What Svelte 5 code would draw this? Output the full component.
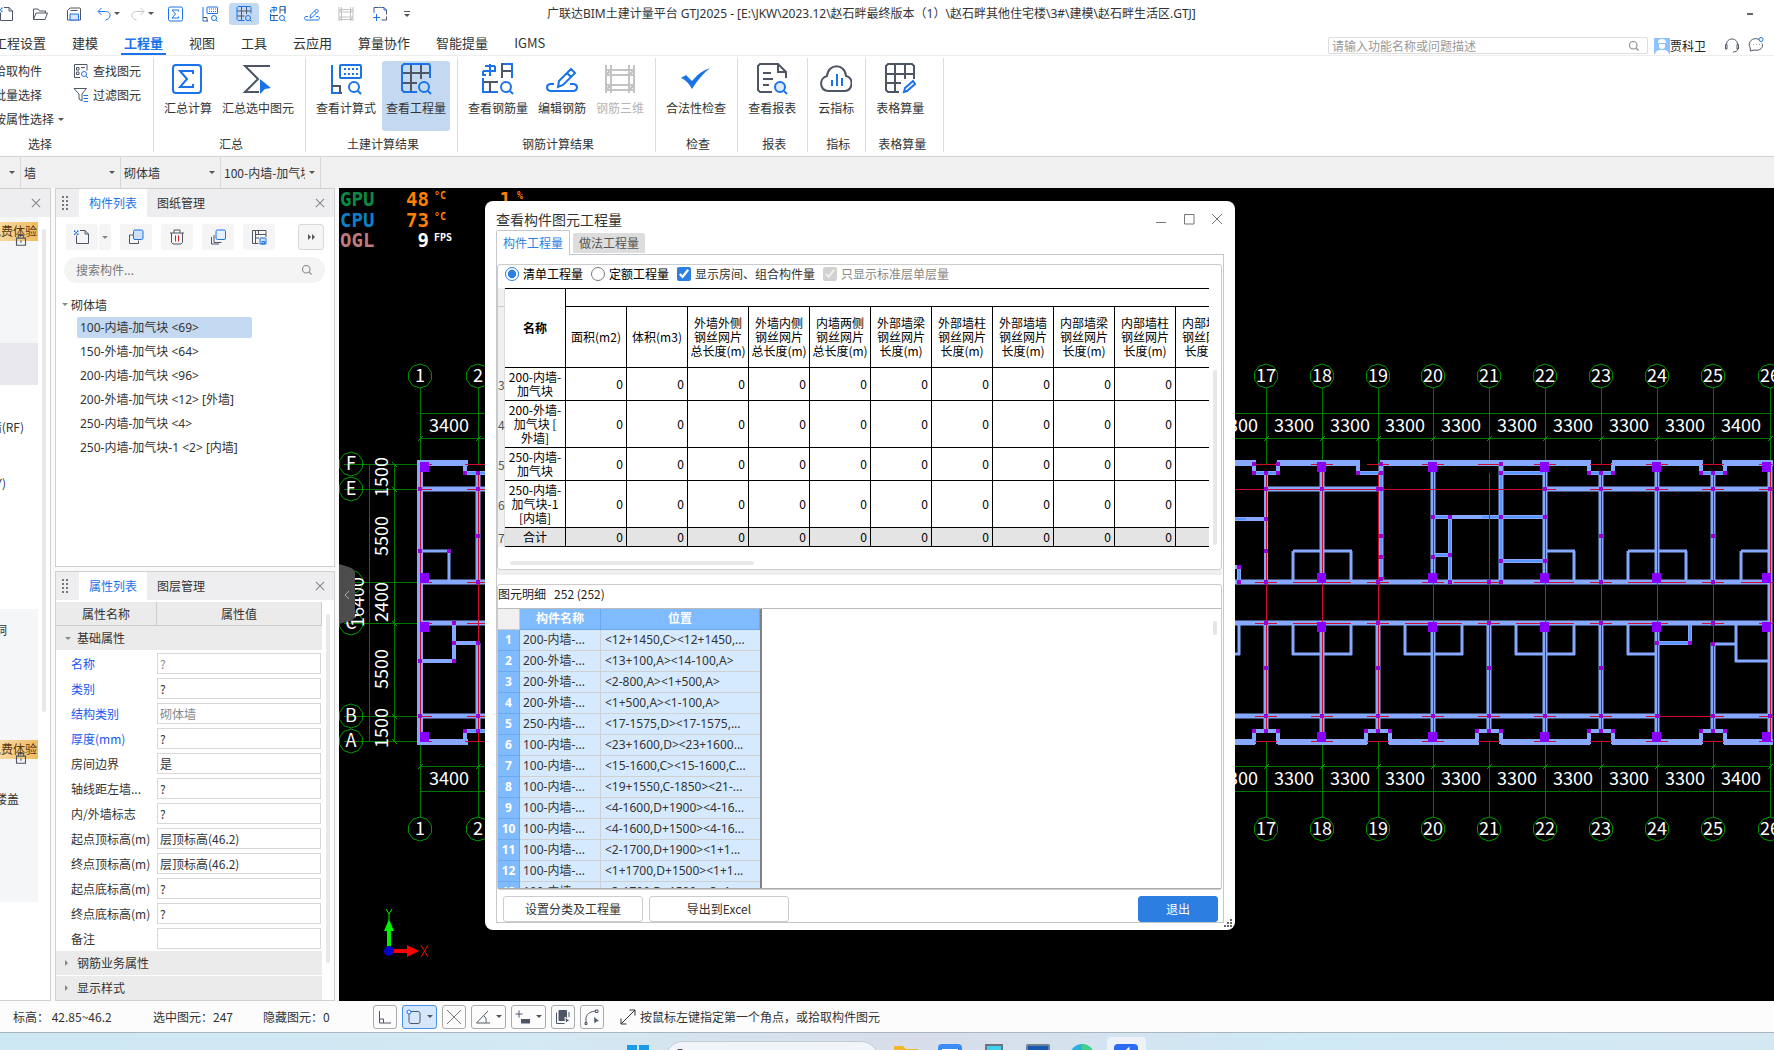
<script>
  const D = "#4e5666";
  const B = "#1a73e8";

  const magnifier = `<circle cx="24" cy="24" r="5" stroke="${B}"/><path d="M28 28l3 3" stroke="${B}"/>`;

  // all icons are drawn on a 32 x 32 grid
  const icons = {
    newDoc: `<path d="M12 3h10l7 7v19H5V13M22 3v7h7" stroke="${D}"/><path d="M0 3h3v3H0zM6 3h3v3H6zM3 6h3v3H3zM0 9h3v3H0zM6 9h3v3H6z" fill="${B}" stroke="none"/>`,
    open: `<path d="M3 27V6h9l3 4h12v4M3 27l5-13h23l-5 13z" stroke="${D}"/>`,
    save: `<path d="M3 28V9l5-5h20l1 1v23z" stroke="${D}"/><path d="M9 9h14" stroke="${D}"/><path d="M8 16h17v12H8z" fill="#d6e6fb" stroke="${B}"/>`,
    undo: `<path d="M11 4l-7 7 7 7M5 11h14c6 0 10 4 9 9-1 4-4 7-9 8" stroke="${B}"/>`,
    redo: `<path d="M21 4l7 7-7 7M27 11H13c-6 0-10 4-9 9 1 4 4 7 9 8" stroke="#c3c3c3"/>`,
    sigma: `<rect x="1" y="2" width="28" height="28" rx="3" stroke="${B}"/><path d="M21 11V8H8l7 8-7 8h13v-3" stroke="${B}"/>`,
    sumSelected: `<path d="M28 3H3l13 13L3 29h14" stroke="${D}"/><path d="M18 16l11 9-6 1-5 5z" fill="${B}" stroke="none"/>`,
    formula: `<path d="M2 2v28h9" stroke="${B}"/><path d="M2 23h8v7h2" stroke="${D}"/><rect x="10" y="2" width="21" height="13" rx="1" stroke="${B}"/><path d="M14 6h2M18 6h2M22 6h2M26 6h2M14 11h2M18 11h2M22 11h2M26 11h2" stroke="${B}"/>${magnifier}`,
    table: `<path d="M2 10h28M2 20h15M11 2v27M21 2v14" stroke="${D}"/><path d="M30 15V3l-1-2H4L2 3v24l2 2h13" stroke="${B}"/>${magnifier}`,
    rebar: `<path d="M8 1v12M3 3h10M13 3v4M1 8h13M1 8v4h3" stroke="${B}" stroke-linejoin="round"/><path d="M20 15V1h10v14M20 8h10" stroke="${D}"/><path d="M30 15V1h-8M1 15v14h15" stroke="${B}"/><path d="M2 19h14M8 19v10" stroke="${D}"/>${magnifier}`,
    edit: `<path d="M8 21H4c-4 1-4 6 0 7h24c4-1 4-6 0-7h-4M12 24l1-6L25 6l4 4-12 12zM21 10l4 4" stroke="${B}"/>`,
    rebar3d: `<path d="M2 2v28M7 2v28M25 2v28M30 2v28M2 7h28M2 12h28M2 22h28M2 27h28M2 12l5-5M25 12l5-5M2 27l5-5M25 27l5-5" stroke="#c3c3c3"/>`,
    frame: `<path d="M4 10V3h9M19 3h5l5 5v9M29 21v7h-8" stroke="${D}"/><path d="M4 14v-4M13 3h6M24 3v5h5M9 16v14M2 23h14M19 28h3" stroke="${B}"/>`,
    check: `<path d="M1 15l5-3 6 6Q20 8 30 5 20 13 12 26 8 18 1 15z" fill="${B}" stroke="none"/>`,
    report: `<path d="M16 29H4l-2-2V3l2-2h18l8 8v6M22 1v8h8M7 10h8M7 16h10M7 22h6" stroke="${D}"/><circle cx="24" cy="24" r="5" fill="#dcebff" stroke="${B}"/><path d="M28 28l3 3" stroke="${B}"/>`,
    cloud: `<path d="M8 28c-9-1-9-13-1-15C8 0 25 0 26 13c8 2 7 14-1 15z" stroke="${D}"/><path d="M12 23v-6M17 23V11M22 23v-8" stroke="${B}"/>`,
    tableEdit: `<path d="M15 29H4l-2-2V3l2-2h24l2 2v13M2 11h28M2 20h15M11 1v28M21 1v15" stroke="${D}"/><path d="M20 29l1-4 8-7 2 3-8 7z" stroke="${B}"/>`,
    find: `<path d="M14 29H3V3h25v12M7 9h5v5H7zM16 9h8M7 18h5v5H7z" stroke="${D}"/><circle cx="22" cy="22" r="5" stroke="${B}"/><path d="M26 26l4 4" stroke="${B}"/>`,
    filter: `<path d="M2 3h25l-9 11v14l-6-4V14z" stroke="${D}"/><path d="M21 17h9M21 23h9M21 29h9" stroke="${B}"/>`,
    copy: `<path d="M10 12H3v17h18v-6" stroke="${D}"/><rect x="11" y="2" width="19" height="19" rx="3" fill="#cfe0f8" stroke="${B}"/>`,
    trash: `<path d="M2 8h28M10 8V2h12v6M5 8v19l3 3h16l3-3V8" stroke="${D}"/><path d="M13 13v12M19 13v12" stroke="#e02020"/>`,
    layers: `<path d="M8 12v15h15M3 16v14h15" stroke="${D}"/><rect x="12" y="2" width="19" height="19" rx="3" fill="#e6f0ff" stroke="${B}"/>`,
    saveAs: `<path d="M15 29H3V3h27v13M9 3v26M15 3v8h15M9 11h6M9 18h7" stroke="${D}"/><path d="M18 18h11l1 1v11H18zM22 25h5v5h-5z" fill="#cfe0f8" stroke="${B}"/>`,
    search: `<circle cx="14" cy="14" r="10" stroke="#888" stroke-width="3"/><path d="M22 22l6 6" stroke="#888" stroke-width="3"/>`,
    headset: `<path d="M5 16C4 0 28 0 27 16M5 15H3v9h3v-9M27 15h2v9h-3v-9M27 24c0 4-4 6-9 6" stroke="${D}"/>`,
    chat: `<path d="M22 5C10-1-2 10 4 21l1 7 7-2c12 3 20-6 16-13M10 15h1M16 15h1M22 15h1" stroke="${D}"/><circle cx="26" cy="5" r="4" stroke="${B}"/>`,
    lock: `<path d="M4 11h24v19H4zM9 11V4h14v7M16 17v6" stroke="${D}" stroke-width="3"/>`,
    close: `<path d="M5 5l22 22M27 5L5 27" stroke="#888" stroke-width="3"/>`,
    closeDark: `<path d="M6 6l20 20M26 6L6 26" stroke="#777"/>`,
    maximize: `<path d="M7 7h19v19H7z" stroke="#777"/>`,
    minimize: `<path d="M6 23h20" stroke="#777"/>`,
    ortho: `<path d="M5 4v24h23M5 20h8v8" stroke="${D}"/>`,
    rect: `<rect x="6" y="5" width="22" height="24" rx="4" stroke="${D}"/><circle cx="6" cy="6" r="4" fill="#fff" stroke="${B}"/>`,
    cross: `<path d="M2 2l28 28M30 2L2 30" stroke="#777"/>`,
    angle: `<path d="M26 4L3 28h27M18 14c4 3 5 8 4 13" stroke="${D}"/>`,
    plus: `<path d="M8 3v14M1 10h14" stroke="${D}"/><path d="M12 20h18v9H12z" fill="${D}" stroke="none"/>`,
    select: `<path d="M8 3h15v20H8z" fill="${D}" stroke="${D}"/><path d="M3 7v22h16M28 6v10" stroke="${D}"/><path d="M20 16l10 8-5 1-4 4z" fill="${D}" stroke="#fff"/>`,
    curve: `<path d="M4 29V17C7 8 14 5 24 4" stroke="${D}"/><path d="M20 16l10 8-5 1-4 4z" fill="${D}" stroke="none"/><path d="M2 27h4v4H2zM23 2h5v5h-5z" stroke="${D}"/>`,
    expand: `<path d="M19 2h11v11M30 2L2 30M2 19v11h11" stroke="#333"/>`,
  };

  const quickIcons = [
    { icon: "newDoc", label: "新建" },
    { icon: "open", label: "打开" },
    { icon: "save", label: "保存" },
    { icon: "undo", label: "撤销", arrow: true },
    { icon: "redo", label: "恢复", arrow: true },
    { icon: "sigma", label: "汇总计算" },
    { icon: "formula", label: "查看计算式" },
    { icon: "table", label: "查看工程量", active: true },
    { icon: "rebar", label: "查看钢筋量" },
    { icon: "edit", label: "编辑钢筋" },
    { icon: "rebar3d", label: "钢筋三维" },
    { icon: "frame", label: "截图" },
  ];

  const menus = ["工程设置", "建模", "工程量", "视图", "工具", "云应用", "算量协作", "智能提量", "IGMS"];

  const ribbonGroups = [
    { name: "汇总", items: [["sigma", "汇总计算"], ["sumSelected", "汇总选中图元"]] },
    { name: "土建计算结果", items: [["formula", "查看计算式"], ["table", "查看工程量"]] },
    { name: "钢筋计算结果", items: [["rebar", "查看钢筋量"], ["edit", "编辑钢筋"], ["rebar3d", "钢筋三维"]] },
    { name: "检查", items: [["check", "合法性检查"]] },
    { name: "报表", items: [["report", "查看报表"]] },
    { name: "指标", items: [["cloud", "云指标"]] },
    { name: "表格算量", items: [["tableEdit", "表格算量"]] },
  ];

  const combos = ["墙", "砌体墙", "100-内墙-加气块"];

  const components = [
    "100-内墙-加气块 <69>",
    "150-外墙-加气块 <64>",
    "200-内墙-加气块 <96>",
    "200-外墙-加气块 <12> [外墙]",
    "250-内墙-加气块 <4>",
    "250-内墙-加气块-1 <2> [内墙]",
  ];
  let selected = $state(0);

  const properties = [
    { name: "名称", value: "?", blue: true, dim: true },
    { name: "类别", value: "?", blue: true },
    { name: "结构类别", value: "砌体墙", blue: true, dim: true },
    { name: "厚度(mm)", value: "?", blue: true },
    { name: "房间边界", value: "是" },
    { name: "轴线距左墙...", value: "?" },
    { name: "内/外墙标志", value: "?" },
    { name: "起点顶标高(m)", value: "层顶标高(46.2)" },
    { name: "终点顶标高(m)", value: "层顶标高(46.2)" },
    { name: "起点底标高(m)", value: "?" },
    { name: "终点底标高(m)", value: "?" },
    { name: "备注", value: "" },
  ];

  const columns = [
    "面积(m2)",
    "体积(m3)",
    "外墙外侧\n钢丝网片\n总长度(m)",
    "外墙内侧\n钢丝网片\n总长度(m)",
    "内墙两侧\n钢丝网片\n总长度(m)",
    "外部墙梁\n钢丝网片\n长度(m)",
    "外部墙柱\n钢丝网片\n长度(m)",
    "外部墙墙\n钢丝网片\n长度(m)",
    "内部墙梁\n钢丝网片\n长度(m)",
    "内部墙柱\n钢丝网片\n长度(m)",
    "内部墙墙\n钢丝网片\n长度(m)",
  ];
  const quantities = [
    { no: 3, name: "200-内墙-\n加气块" },
    { no: 4, name: "200-外墙-\n加气块 [\n外墙]", tall: true },
    { no: 5, name: "250-内墙-\n加气块" },
    { no: 6, name: "250-内墙-\n加气块-1\n[内墙]", tall: true },
    { no: 7, name: "合计", total: true },
  ];

  const details = [
    ["200-内墙-...", "<12+1450,C><12+1450,..."],
    ["200-外墙-...", "<13+100,A><14-100,A>"],
    ["200-外墙-...", "<2-800,A><1+500,A>"],
    ["200-外墙-...", "<1+500,A><1-100,A>"],
    ["250-内墙-...", "<17-1575,D><17-1575,..."],
    ["100-内墙-...", "<23+1600,D><23+1600..."],
    ["100-内墙-...", "<15-1600,C><15-1600,C..."],
    ["100-内墙-...", "<19+1550,C-1850><21-..."],
    ["100-内墙-...", "<4-1600,D+1900><4-16..."],
    ["100-内墙-...", "<4-1600,D+1500><4-16..."],
    ["100-内墙-...", "<2-1700,D+1900><1+1..."],
    ["100-内墙-...", "<1+1700,D+1500><1+1..."],
    ["100-内墙-...", "<3-1700,D+1500><3+1..."],
  ];

  let scope = $state("list");
  let showRooms = $state(true);

  // ---- floor plan ----
  const axes = [
    [1, 420], [2, 478], [17, 1266], [18, 1322], [19, 1378], [20, 1433], [21, 1489],
    [22, 1545], [23, 1601], [24, 1657], [25, 1713], [26, 1770],
  ];
  const rows = [["F", 464], ["E", 489], ["C", 623], ["B", 716], ["A", 741]];
  const spans = [
    ["3400", 449], ["3300", 1238], ["3300", 1294], ["3300", 1350], ["3300", 1405], ["3300", 1461],
    ["3300", 1517], ["3300", 1573], ["3300", 1629], ["3300", 1685], ["3400", 1741],
  ];
  const sideSpans = [["1500", 477], ["5500", 536], ["2400", 602], ["5500", 669], ["1500", 728]];

  // x1, y1, x2, y2, thickness
  const walls = [
    [417, 463, 468, 463, 6], [420, 461, 420, 744, 6], [465, 463, 465, 474, 4], [463, 473, 486, 473, 4],
    [420, 489, 486, 489, 5], [478, 473, 478, 582, 5], [420, 582, 486, 582, 5], [420, 623, 486, 623, 5],
    [420, 551, 451, 551, 3], [449, 551, 449, 582, 3], [454, 623, 454, 662, 4], [454, 643, 480, 643, 4],
    [420, 661, 455, 661, 4], [478, 643, 478, 731, 5], [420, 716, 486, 716, 5], [417, 742, 468, 742, 6],
    [465, 730, 465, 742, 4], [463, 731, 486, 731, 4],
    [1235, 463, 1256, 463, 6], [1277, 463, 1360, 463, 6], [1380, 463, 1591, 463, 6],
    [1612, 463, 1703, 463, 6], [1722, 463, 1773, 463, 6],
    [1254, 463, 1254, 474, 4], [1278, 463, 1278, 474, 4], [1252, 473, 1280, 473, 4],
    [1358, 463, 1358, 474, 4], [1357, 473, 1383, 473, 4],
    [1589, 463, 1589, 474, 4], [1613, 463, 1613, 474, 4], [1587, 473, 1615, 473, 4],
    [1701, 463, 1701, 474, 4], [1725, 463, 1725, 474, 4], [1699, 473, 1727, 473, 4],
    [1266, 489, 1381, 489, 5], [1545, 489, 1772, 489, 5],
    [1266, 473, 1266, 582, 4], [1322, 463, 1322, 582, 5], [1381, 463, 1381, 584, 5],
    [1433, 463, 1433, 582, 5], [1501, 463, 1501, 582, 5], [1545, 463, 1545, 582, 5],
    [1601, 473, 1601, 582, 5], [1657, 463, 1657, 582, 5], [1713, 473, 1713, 582, 5],
    [1770, 463, 1770, 744, 5],
    [1235, 519, 1266, 519, 4], [1433, 517, 1545, 517, 4], [1450, 517, 1450, 582, 4],
    [1433, 555, 1450, 555, 4], [1501, 473, 1545, 473, 4], [1501, 561, 1545, 561, 4],
    [1235, 567, 1241, 567, 4], [1239, 567, 1239, 582, 4],
    [1293, 551, 1352, 551, 3], [1293, 551, 1293, 582, 3], [1351, 551, 1351, 582, 3],
    [1545, 551, 1575, 551, 3], [1574, 551, 1574, 582, 3],
    [1628, 551, 1687, 551, 3], [1628, 551, 1628, 582, 3], [1686, 551, 1686, 582, 3],
    [1741, 551, 1770, 551, 3], [1741, 551, 1741, 582, 3],
    [1235, 582, 1772, 582, 5], [1235, 623, 1772, 623, 5],
    [1239, 623, 1239, 655, 3], [1235, 654, 1240, 654, 3],
    [1293, 623, 1293, 655, 3], [1351, 623, 1351, 655, 3], [1292, 654, 1352, 654, 3],
    [1405, 623, 1405, 655, 3], [1462, 623, 1462, 655, 3], [1404, 654, 1463, 654, 3],
    [1516, 623, 1516, 655, 3], [1574, 623, 1574, 655, 3], [1515, 654, 1575, 654, 3],
    [1628, 623, 1628, 655, 3], [1627, 654, 1657, 654, 3],
    [1657, 643, 1691, 643, 4], [1690, 623, 1690, 645, 4],
    [1711, 644, 1737, 644, 3], [1736, 623, 1736, 662, 3], [1735, 661, 1770, 661, 3],
    [1266, 623, 1266, 731, 5], [1322, 623, 1322, 742, 5], [1378, 623, 1378, 731, 5],
    [1433, 623, 1433, 742, 5], [1489, 623, 1489, 731, 5], [1545, 623, 1545, 742, 5],
    [1601, 623, 1601, 731, 5], [1657, 623, 1657, 742, 5], [1713, 643, 1713, 731, 5],
    [1235, 716, 1657, 716, 5], [1713, 716, 1772, 716, 5],
    [1235, 742, 1255, 742, 6], [1278, 742, 1367, 742, 6], [1389, 742, 1479, 742, 6],
    [1501, 742, 1590, 742, 6], [1612, 742, 1702, 742, 6], [1724, 742, 1773, 742, 6],
  ];
  for (const x of [1266, 1378, 1489, 1601, 1713]) {
    walls.push([x - 14, 731, x + 14, 731, 4], [x - 12, 730, x - 12, 744, 4], [x + 12, 730, x + 12, 744, 4]);
  }

  // brighter centre lines of the thin inner walls
  const cores = [
    [1255, 473, 1278, 473], [1360, 473, 1380, 473], [1590, 473, 1612, 473], [1702, 473, 1724, 473],
    [1381, 473, 1381, 580], [1501, 473, 1501, 580], [1503, 473, 1543, 473], [1435, 517, 1448, 517],
    [1482, 517, 1543, 517], [1450, 520, 1450, 580], [1503, 561, 1543, 561], [1435, 555, 1448, 555],
    [1235, 519, 1246, 519], [1239, 569, 1239, 580], [1659, 643, 1688, 643], [1690, 625, 1690, 641],
    [467, 473, 486, 473], [467, 731, 486, 731],
  ];

  const reds = [
    [1235, 489, 1545, 489], [1657, 716, 1713, 716], [420, 463, 420, 742], [478, 473, 478, 742],
    [465, 464, 486, 464], [465, 741, 486, 741],
  ];
  for (const [no, x] of axes.slice(2)) {
    const even = no % 2 === 0;
    reds.push([x, even ? 464 : 473, x, even ? 741 : 731]);
    for (const y of [464, 489, 582, 623, 716, 741]) {
      if (y === 489 && no > 19 && no < 22) continue;
      reds.push([x - 11, y, Math.min(x + 11, 1774), y]);
    }
  }
  for (const y of [464, 489, 582, 623, 716, 741]) reds.push([420, y, 432, y], [467, y, 486, y]);
  for (const [a, b] of [[1293, 1351], [1545, 1574], [1628, 1686], [1741, 1770], [1454, 1501]]) reds.push([a, 582, b, 582]);
  for (const [a, b] of [[1293, 1351], [1405, 1462], [1516, 1574], [1628, 1657]]) reds.push([a, 623, b, 623]);

  const columnBlocks = [];
  for (const x of [425, 1322, 1433, 1545, 1657, 1767]) {
    for (const y of [467, 578, 627, 737]) columnBlocks.push([x, y]);
  }

  const dots = [
    [1254, 464], [1278, 464], [1254, 473], [1266, 473], [1278, 473], [1266, 551], [1381, 464], [1381, 473],
    [1381, 489], [1381, 536], [1381, 557], [1381, 579], [1358, 473], [1433, 517], [1450, 517], [1501, 517],
    [1545, 517], [1450, 555], [1433, 557], [1501, 473], [1501, 464], [1501, 561], [1545, 561], [1501, 582],
    [1450, 582], [1601, 536], [1713, 536], [1589, 473], [1613, 473], [1601, 473], [1701, 473], [1725, 473],
    [1713, 473], [1239, 567], [1239, 582], [1266, 519], [1266, 668], [1378, 668], [1489, 668], [1601, 668],
    [1690, 643], [1657, 643], [1713, 644], [478, 473], [465, 473], [478, 536], [478, 582], [420, 489],
    [478, 489], [420, 716], [478, 716], [454, 623], [454, 643], [454, 661], [478, 643], [420, 661], [420, 551],
    [449, 551], [465, 731], [478, 731],
  ];
  for (const [no, x] of axes.slice(2)) {
    for (const y of [489, 716]) if (!(y === 489 && (no === 20 || no === 21))) dots.push([x, y]);
    if (no % 2) dots.push([x, 582], [x, 623], [x, 731], [x - 12, 731], [x + 12, 731]);
  }

  const bubble = (cx, cy) =>
    Array.from({ length: 10 }, (_, i) => {
      const a = (Math.PI / 5) * i + Math.PI / 2;
      return `${(cx + 12 * Math.cos(a)).toFixed(1)},${(cy + 12 * Math.sin(a)).toFixed(1)}`;
    }).join(" ");
</script>

{#snippet icon(name, size = "s16")}
  <svg class="icon {size}" viewBox="0 0 32 32" fill="none" stroke-width="2" aria-hidden="true">{@html icons[name]}</svg>
{/snippet}

<div class="app">
  <header class="titlebar">
    <div class="quick">
      {#each quickIcons as q}
        <button class="quick-btn" class:active={q.active} aria-label={q.label}>
          {@render icon(q.icon)}{#if q.arrow}<span class="caret"></span>{/if}
        </button>
      {/each}
      <button class="quick-more" aria-label="更多"><span></span><i class="caret"></i></button>
    </div>
    <div class="title">广联达BIM土建计量平台 GTJ2025 - [E:\JKW\2023.12\赵石畔最终版本（1）\赵石畔其他住宅楼\3#\建模\赵石畔生活区.GTJ]</div>
    <button class="win-min" aria-label="最小化"></button>
  </header>

  <nav class="menubar">
    {#each menus as m}
      <a href="#top" class:current={m === "工程量"}>{m}</a>
    {/each}
    <label class="help-search">
      <input type="text" aria-label="搜索功能" placeholder="请输入功能名称或问题描述" />
      {@render icon("search", "s12")}
    </label>
    <div class="user">
      <svg class="avatar" viewBox="0 0 16 16"><rect width="16" height="16" fill="#8fc3ff" /><path d="M4 5a4 4 0 018 0zM5 6h6v2a3 3 0 01-6 0zM1 16c1-4 4-4 7-4s6 0 7 4z" fill="#fff" /></svg>
      <span>贾科卫</span>
    </div>
    <button class="plain" aria-label="客服">{@render icon("headset")}</button>
    <button class="plain" aria-label="消息">{@render icon("chat")}</button>
  </nav>

  <section class="ribbon">
    <div class="group select-group">
      <div class="select-cols">
        <div class="select-col first">
          <button>拾取构件</button>
          <button>批量选择</button>
          <button>按属性选择<span class="caret"></span></button>
        </div>
        <div class="select-col">
          <button>{@render icon("find")}查找图元</button>
          <button>{@render icon("filter")}过滤图元</button>
        </div>
      </div>
      <div class="caption">选择</div>
    </div>
    {#each ribbonGroups as g}
      <div class="group">
        <div class="tools">
          {#each g.items as [ic, label]}
            <button class="tool" class:active={label === "查看工程量"} disabled={label === "钢筋三维"}>
              {@render icon(ic, "s32")}
              <span>{label}</span>
            </button>
          {/each}
        </div>
        <div class="caption">{g.name}</div>
      </div>
    {/each}
  </section>

  <div class="combos">
    <div class="combo-stub"><span class="caret"></span></div>
    {#each combos as c}
      <div class="combo">
        <select aria-label={c}><option>{c}</option></select>
        <span class="caret"></span>
      </div>
    {/each}
  </div>

  <main class="work">
    <aside class="nav-dock">
      <div class="panel-head end"><button class="plain" aria-label="关闭导航">{@render icon("close", "s12")}</button></div>
      <div class="nav-body">
        <div class="nav-list">
          <div class="nav-block upper">
            <div class="badge">免费体验</div>
            {@render icon("lock", "s12")}
          </div>
          <div class="nav-current"></div>
          <div class="nav-rows">
            <span>砌体墙(RF)</span>
            <span>梁(Y)</span>
          </div>
          <div class="nav-block lower">
            <span>门窗洞</span>
            <div class="lock-row">
              <div class="badge">免费体验</div>
              {@render icon("lock", "s12")}
            </div>
            <span>空心楼盖</span>
          </div>
        </div>
        <div class="nav-scroll"></div>
      </div>
    </aside>

    <div class="docks">
      <section class="panel list-panel">
        <div class="panel-head">
          <span class="grip"></span>
          <button class="tab on">构件列表</button>
          <button class="tab">图纸管理</button>
          <button class="plain close" aria-label="关闭">{@render icon("close", "s12")}</button>
        </div>
        <div class="panel-tools">
          <div class="split">
            <button aria-label="新建构件">{@render icon("newDoc")}</button>
            <button class="drop" aria-label="新建选项"><span class="caret"></span></button>
          </div>
          <button aria-label="复制">{@render icon("copy")}</button>
          <button aria-label="删除">{@render icon("trash")}</button>
          <button aria-label="层间复制">{@render icon("layers")}</button>
          <button aria-label="存档">{@render icon("saveAs")}</button>
          <button class="more" aria-label="更多工具"><i></i><i></i></button>
        </div>
        <label class="search">
          <input type="text" aria-label="搜索构件" placeholder="搜索构件..." />
          {@render icon("search", "s12")}
        </label>
        <div class="tree">
          <div class="tree-root"><span class="caret"></span>砌体墙</div>
          {#each components as c, i}
            <button class="tree-item" class:selected={selected === i} onclick={() => (selected = i)}>{c}</button>
          {/each}
        </div>
      </section>

      <section class="panel">
        <div class="panel-head">
          <span class="grip"></span>
          <button class="tab on">属性列表</button>
          <button class="tab">图层管理</button>
          <button class="plain close" aria-label="关闭">{@render icon("close", "s12")}</button>
        </div>
        <div class="props">
          <div class="prop-list">
            <div class="prop-head"><span>属性名称</span><span>属性值</span></div>
            <div class="prop-cat"><span class="caret"></span>基础属性</div>
            {#each properties as p, i}
              <div class="prop-row">
                <label for="prop{i}" class:blue={p.blue}>{p.name}</label>
                <input id="prop{i}" type="text" value={p.value} class:dim={p.dim} />
              </div>
            {/each}
            <div class="prop-cat line"><span class="caret right"></span>钢筋业务属性</div>
            <div class="prop-cat line"><span class="caret right"></span>显示样式</div>
          </div>
          <div class="prop-scroll"></div>
        </div>
      </section>
    </div>

    <div class="canvas">
      <svg class="plan">
        <g transform="translate(-339 -188)">
          <g class="osd">
            <text x="340" y="206" fill="#0b8a43">GPU</text>
            <text x="340" y="227" fill="#0a80c8">CPU</text>
            <text x="340" y="247" fill="#c07c7c">OGL</text>
            <g text-anchor="end">
              <text x="429" y="206" fill="#ff8000">48</text>
              <text x="429" y="227" fill="#ff8000">73</text>
              <text x="429" y="247" fill="#fff">9</text>
              <text x="511" y="206" fill="#ff8000">1</text>
            </g>
            <g class="unit">
              <text x="434" y="199" fill="#ff8000">°C</text>
              <text x="434" y="220" fill="#ff8000">°C</text>
              <text x="434" y="241" fill="#fff">FPS</text>
              <text x="517" y="199" fill="#ff8000">%</text>
            </g>
          </g>

          <g stroke="#007800" fill="none" shape-rendering="crispEdges">
            {#each axes as [, x]}
              <path d="M{x} 388V464M{x} 741V817" />
            {/each}
            {#each rows as [, y]}
              <path d="M344 {y}H420" />
            {/each}
            <path d="M344 582H420M420 413H1770M420 438H1770M420 766H1770M420 791H1770M369 464V741M394 464V741" />
          </g>
          <g stroke="#009a00" fill="none">
            {#each axes as [, x]}
              <polygon points={bubble(x, 376)} />
              <polygon points={bubble(x, 829)} />
              <path d="M{x - 2} 441l5-5M{x - 2} 769l5-5" />
            {/each}
            {#each rows as [, y]}
              <polygon points={bubble(351, y)} />
              <path d="M392 {y - 2}l5 5" />
            {/each}
            <polygon points={bubble(351, 582)} />
          </g>

          {#each walls as [x1, y1, x2, y2, w]}
            <line {x1} {y1} {x2} {y2} stroke="#86a9ff" stroke-width={w} />
          {/each}
          {#each cores as [x1, y1, x2, y2]}
            <line {x1} {y1} {x2} {y2} stroke="#2a80ff" />
          {/each}
          {#each reds as [x1, y1, x2, y2]}
            <line {x1} {y1} {x2} {y2} stroke="#d4082e" shape-rendering="crispEdges" />
          {/each}
          {#each columnBlocks as [x, y]}
            <rect x={x - 5} y={y - 5} width="9" height="10" fill="#8a00ff" />
          {/each}
          {#each dots as [x, y]}
            <rect x={x - 2} y={y - 2} width="4" height="4" fill="#9a00d8" />
          {/each}

          <g class="dims">
            {#each axes as [no, x]}
              <text {x} y="382">{no}</text>
              <text {x} y="835">{no}</text>
            {/each}
            {#each rows as [name, y]}
              <text x="351" y={y + 6}>{name}</text>
            {/each}
            {#each spans as [len, x]}
              <text {x} y="432">{len}</text>
              <text {x} y="785">{len}</text>
            {/each}
            {#each sideSpans as [len, y]}
              <text transform="translate(388 {y}) rotate(-90)">{len}</text>
            {/each}
            <text transform="translate(364 602) rotate(-90)">16400</text>
          </g>

          <path d="M339 564l10 3q6 2 6 6v42q0 5-5 6l-11 3z" fill="#4d4d4d" />
          <path d="M349 591l-4 4 4 4" stroke="#aaa" fill="none" />

          <path d="M387 951v-20h-3l5-12 5 12h-3v20z" fill="#00f000" />
          <path d="M389 949h18v-4l12 6-12 6v-4h-18z" fill="#f00" />
          <circle cx="389" cy="951" r="5" fill="#0000c8" />
          <path d="M386 909l3 5 3-5M389 914v6" stroke="#00f000" fill="none" />
          <path d="M421 945l7 12M428 945l-7 12" stroke="#f00" fill="none" />
        </g>
      </svg>

      <div class="dialog" role="dialog" aria-label="查看构件图元工程量">
        <div class="dialog-head">
          <h2>查看构件图元工程量</h2>
          <button class="plain" aria-label="最小化">{@render icon("minimize")}</button>
          <button class="plain" aria-label="最大化">{@render icon("maximize")}</button>
          <button class="plain" aria-label="关闭">{@render icon("closeDark")}</button>
        </div>
        <div class="dialog-tabs">
          <button class="dtab on">构件工程量</button>
          <button class="dtab">做法工程量</button>
        </div>
        <div class="dialog-frame">
          <div class="box">
            <div class="options">
              <label class="strong"><input type="radio" bind:group={scope} value="list" />清单工程量</label>
              <label class="strong"><input type="radio" bind:group={scope} value="quota" />定额工程量</label>
              <label><input type="checkbox" bind:checked={showRooms} />显示房间、组合构件量</label>
              <label class="off"><input type="checkbox" checked disabled />只显示标准层单层量</label>
            </div>
            <div class="qty-area">
              <div class="qty-clip">
                <table class="qty">
                  <colgroup>
                    <col class="col-no" />
                    <col class="col-data" span="12" />
                  </colgroup>
                  <thead>
                    <tr class="band"><td class="no"></td><th rowspan="2" class="name">名称</th><th colspan="11"></th></tr>
                    <tr class="heads"><td class="no"></td>{#each columns as c}<th>{c}</th>{/each}</tr>
                  </thead>
                  <tbody>
                    {#each quantities as q}
                      <tr class:tall={q.tall} class:total={q.total}>
                        <td class="no">{q.no}</td>
                        <td class="name">{q.name}</td>
                        {#each columns as _}<td>0</td>{/each}
                      </tr>
                    {/each}
                  </tbody>
                </table>
              </div>
              <div class="qty-scroll"></div>
            </div>
            <div class="qty-hscroll"></div>
          </div>
          <div class="splitter"></div>
          <div class="box detail-box">
            <div class="detail-title">图元明细 &nbsp;&nbsp;252 (252)</div>
            <div class="detail-area">
              <table class="detail">
                <thead><tr><th class="corner"></th><th>构件名称</th><th>位置</th></tr></thead>
                <tbody>
                  {#each details as [name, place], i}
                    <tr><th>{i + 1}</th><td>{name}</td><td class="place">{place}</td></tr>
                  {/each}
                </tbody>
              </table>
              <div class="detail-scroll"></div>
            </div>
          </div>
          <div class="dialog-foot">
            <button>设置分类及工程量</button>
            <button>导出到Excel</button>
            <button class="primary">退出</button>
          </div>
        </div>
        <svg class="resize" viewBox="0 0 8 8"><path d="M6 0h2v2H6zM3 3h2v2H3zM6 3h2v2H6zM0 6h2v2H0zM3 6h2v2H3zM6 6h2v2H6z" fill="#666" /></svg>
      </div>
    </div>
  </main>

  <footer class="status">
    <span class="elev">标高： 42.85~46.2</span>
    <span class="picked">选中图元：247</span>
    <span class="hidden-count">隐藏图元：0</span>
    <div class="snap">
      <button aria-label="正交">{@render icon("ortho")}</button>
      <button class="wide on" aria-label="矩形">{@render icon("rect")}<span class="caret"></span></button>
      <button aria-label="交点">{@render icon("cross")}</button>
      <button class="wide" aria-label="角度">{@render icon("angle")}<span class="caret"></span></button>
      <button class="wide" aria-label="偏移">{@render icon("plus")}<span class="caret"></span></button>
      <button aria-label="选择">{@render icon("select")}</button>
      <button aria-label="折线">{@render icon("curve")}</button>
    </div>
    {@render icon("expand")}
    <span>按鼠标左键指定第一个角点，或拾取构件图元</span>
  </footer>

  <div class="taskbar">
    <svg class="win" viewBox="0 0 22 22"><path d="M0 0h10v10H0zM12 0h10v10H12zM0 12h10v10H0zM12 12h10v10H12z" fill="#1a9be8" /></svg>
    <div class="task-search"><svg viewBox="0 0 14 14"><circle cx="6" cy="6" r="5" fill="none" stroke="#333" stroke-width="2" /></svg></div>
    <svg class="task" viewBox="0 0 24 24"><path d="M0 2h9l3 3h12v19H0z" fill="#f2b62c" /><path d="M0 8h24v16H0z" fill="#ffd766" /></svg>
    <svg class="task" viewBox="0 0 24 24"><rect width="24" height="24" rx="4" fill="#3b8df5" /><path d="M4 6h16M8 6v14M16 6v14" stroke="#fff" stroke-width="2" /></svg>
    <svg class="task" viewBox="0 0 24 24"><rect x="3" width="18" height="24" fill="#6a7580" /><rect x="5" y="2" width="14" height="18" fill="#3fd0f0" /></svg>
    <svg class="task" viewBox="0 0 24 24"><rect width="24" height="20" rx="2" fill="#6f8296" /><rect x="2" y="2" width="20" height="18" fill="#1558b0" /></svg>
    <svg class="task" viewBox="0 0 24 24"><circle cx="12" cy="12" r="12" fill="#27b4d8" /><path d="M12 0a12 12 0 0112 12H12z" fill="#43cf8c" /></svg>
    <div class="task-active"><svg class="task" viewBox="0 0 24 24"><rect width="24" height="24" rx="4" fill="#2a6af5" /><path d="M8 12l6-6v4h4" stroke="#fff" stroke-width="3" fill="none" /></svg></div>
  </div>
</div>

<style>
  :global(body) {
    background: #fff;
    overflow: hidden;
  }

  .app {
    display: flex;
    flex-direction: column;
    min-height: 100vh;
    overflow: hidden;
    font: 12px/18px "Noto Sans CJK SC", "Noto Sans", sans-serif;
    color: #333;
  }

  .app * {
    box-sizing: border-box;
  }

  button,
  input,
  select {
    font: inherit;
    color: inherit;
    border: 0;
    padding: 0;
    margin: 0;
    background: none;
    border-radius: 0;
    outline: none;
  }

  .icon {
    display: block;
    flex: none;
  }

  .s12 {
    width: 12px;
    height: 12px;
  }

  .s16 {
    width: 16px;
    height: 16px;
  }

  .s32 {
    width: 32px;
    height: 32px;
  }

  .caret {
    display: inline-block;
    flex: none;
    border: 3px solid transparent;
    border-top: 3px solid #555;
    border-bottom: 0;
  }

  .caret.right {
    border: 3px solid transparent;
    border-left: 3px solid #888;
    border-right: 0;
  }

  .plain {
    display: flex;
  }

  /* title bar */
  .titlebar {
    display: flex;
    align-items: center;
    height: 27px;
  }

  .quick {
    display: flex;
    gap: 4px;
    margin-left: -9px;
  }

  .quick-btn {
    display: flex;
    align-items: center;
    justify-content: center;
    gap: 2px;
    width: 30px;
    height: 22px;
    border-radius: 3px;
  }

  .quick-btn.active,
  .tool.active {
    background: #c3d9f1;
  }

  .quick-more {
    display: flex;
    flex-direction: column;
    align-items: center;
    justify-content: center;
    gap: 2px;
    width: 16px;
  }

  .quick-more span {
    width: 6px;
    height: 1px;
    background: #555;
  }

  .title {
    flex: 1;
    margin-left: 132px;
    font-family: "Noto Sans", "Noto Sans CJK SC", sans-serif;
    white-space: nowrap;
  }

  .win-min {
    width: 6px;
    height: 2px;
    margin-right: 21px;
    background: #666;
  }

  /* menu */
  .menubar {
    display: flex;
    align-items: flex-end;
    height: 29px;
    border-bottom: 1px solid #eee;
    font-size: 13px;
  }

  .menubar a {
    margin: 0 10px;
    padding: 0 3px;
    line-height: 20px;
    border-bottom: 2px solid transparent;
    color: #333;
    text-decoration: none;
    white-space: nowrap;
  }

  .menubar a:first-child {
    margin-left: -9px;
  }

  .menubar a.current {
    color: #1a73e8;
    font-weight: bold;
    border-bottom-color: #1a73e8;
  }

  .help-search {
    display: flex;
    align-items: center;
    width: 320px;
    height: 17px;
    margin: 0 0 1px auto;
    padding: 0 7px 0 3px;
    border: 1px solid #ddd;
    border-radius: 2px;
    font-size: 12px;
  }

  .help-search input {
    flex: 1;
    height: 15px;
  }

  .help-search input::placeholder {
    color: #999;
  }

  .user {
    display: flex;
    align-items: center;
    margin: 0 18px 0 6px;
    font-size: 12px;
    color: #222;
  }

  .avatar {
    width: 16px;
    height: 16px;
  }

  .menubar .plain {
    margin: 0 8px 2px 0;
  }

  .menubar .plain:last-child {
    margin-right: 10px;
  }

  /* ribbon */
  .ribbon {
    display: flex;
    height: 101px;
    border-bottom: 1px solid #d4d4d4;
  }

  .group {
    display: flex;
    flex-direction: column;
    margin: 2px 0 4px;
    padding: 3px 7px 0 6px;
    border-right: 1px solid #ddd;
  }

  .group:last-child {
    padding-right: 15px;
  }

  .caption {
    margin-top: 4px;
    text-align: center;
    padding-left: 4px;
    color: #333;
  }

  .tools {
    display: flex;
    gap: 2px;
  }

  .tool {
    display: flex;
    flex-direction: column;
    align-items: center;
    gap: 4px;
    height: 70px;
    padding: 2px 4px 0;
    border-radius: 3px;
    white-space: nowrap;
  }

  .tool:disabled {
    color: #b5b5b5;
  }

  .select-group {
    width: 154px;
    flex: none;
    padding: 1px 12px 0 0;
  }

  .select-group .caption {
    padding: 0;
    width: 80px;
  }

  .select-cols {
    display: flex;
    justify-content: space-between;
    height: 72px;
  }

  .select-col.first {
    margin-left: -6px;
  }

  .select-col button {
    display: flex;
    align-items: center;
    gap: 4px;
    height: 24px;
    white-space: nowrap;
  }

  /* combo row */
  .combos {
    display: flex;
    height: 31px;
    background: #f0f0f0;
  }

  .combo,
  .combo-stub {
    position: relative;
    display: flex;
    align-items: center;
    width: 100px;
    border-right: 1px solid #d8d8d8;
  }

  .combo-stub {
    width: 21px;
  }

  .combo .caret,
  .combo-stub .caret {
    position: absolute;
    right: 5px;
  }

  .combo select {
    width: 84px;
    padding-left: 3px;
    appearance: none;
  }

  /* work area */
  .work {
    display: flex;
    flex: 1;
    gap: 4px;
    background: #fafafa;
  }

  .panel-head {
    display: flex;
    align-items: center;
    height: 28px;
    background: #eeeef1;
  }

  .panel-head.end {
    justify-content: flex-end;
    padding-right: 8px;
  }

  .nav-dock {
    width: 51px;
    flex: none;
    display: flex;
    flex-direction: column;
    border: solid #d0d0d0;
    border-width: 1px 1px 1px 0;
    background: #fff;
  }

  .nav-body {
    display: flex;
    flex: 1;
  }

  .nav-list {
    display: flex;
    flex-direction: column;
    width: 38px;
    overflow: hidden;
  }

  .nav-list > div {
    flex: none;
  }

  .nav-list span {
    align-self: flex-end;
    white-space: nowrap;
  }

  .nav-block {
    display: flex;
    flex-direction: column;
    align-items: flex-end;
    background: #f5f6f8;
  }

  .nav-block .icon {
    margin: -7px 11px 0 0;
  }

  .upper {
    height: 126px;
    padding-top: 5px;
  }

  .badge {
    align-self: stretch;
    display: flex;
    justify-content: flex-end;
    height: 19px;
    padding-right: 1px;
    background: linear-gradient(90deg, #f8d9a0, #eebb62);
    color: #5c3a10;
    white-space: nowrap;
  }

  .nav-current {
    height: 42px;
    background: #e9e9ed;
  }

  .nav-rows {
    display: flex;
    flex-direction: column;
    gap: 38px;
    height: 224px;
    padding: 33px 14px 0 0;
  }

  .nav-rows span:last-child {
    margin-right: 18px;
  }

  .lower {
    gap: 26px;
    height: 293px;
    padding-top: 12px;
  }

  .lower > span {
    margin-right: 31px;
  }

  .lower > span:last-child {
    margin-right: 19px;
  }

  .lock-row {
    display: flex;
    flex-direction: column;
    align-items: flex-end;
    width: 38px;
    margin-top: 75px;
  }

  .nav-scroll {
    width: 4px;
    height: 483px;
    margin: 12px 0 0 4px;
    border-radius: 2px;
    background: #e8e8e8;
  }

  .docks {
    display: flex;
    flex-direction: column;
    gap: 4px;
    width: 280px;
    flex: none;
  }

  .panel {
    border: 1px solid #d0d0d0;
    background: #fff;
  }

  .list-panel {
    flex: 1;
  }

  .grip {
    width: 8px;
    height: 16px;
    margin: 0 10px 0 5px;
    background: radial-gradient(#777 1px, transparent 1px) 0 0 / 4px 4px;
  }

  .tab {
    height: 28px;
    padding: 0 10px;
  }

  .tab.on {
    background: #fff;
    color: #1a73e8;
  }

  .panel-head .close {
    margin: 0 8px 0 auto;
  }

  .panel-tools {
    display: flex;
    gap: 9px;
    padding: 7px 10px;
  }

  .panel-tools button {
    display: flex;
    align-items: center;
    justify-content: center;
    width: 32px;
    height: 26px;
    border-radius: 3px;
    background: #f5f5f5;
  }

  .split {
    display: flex;
    gap: 1px;
  }

  .panel-tools .drop {
    width: 12px;
  }

  .panel-tools .more {
    width: 26px;
    margin-left: auto;
    gap: 1px;
    border: 1px solid #d8d8d8;
  }

  .more i {
    border: 3px solid transparent;
    border-left: 3px solid #555;
    border-right: 0;
  }

  .search {
    display: flex;
    align-items: center;
    height: 26px;
    margin: 0 9px 0 8px;
    padding: 0 12px;
    border-radius: 13px;
    background: #f4f4f4;
  }

  .search input {
    flex: 1;
    min-width: 0;
  }

  .search input::placeholder {
    color: #777;
  }

  .tree {
    display: flex;
    flex-direction: column;
    align-items: flex-start;
    gap: 3px;
    padding: 12px 6px;
  }

  .tree-root {
    display: flex;
    align-items: center;
    gap: 3px;
    height: 19px;
  }

  .tree-root .caret,
  .drop .caret,
  .prop-cat .caret {
    border-top-color: #888;
  }

  .tree-item {
    width: 175px;
    height: 21px;
    margin-left: 15px;
    padding: 0 3px;
    border-radius: 2px;
    font-family: "Noto Sans", "Noto Sans CJK SC", sans-serif;
    line-height: 21px;
    text-align: left;
    white-space: pre;
  }

  .tree-item.selected {
    background: #c3d9f1;
  }

  /* properties */
  .props {
    display: flex;
    padding-top: 2px;
  }

  .prop-list {
    width: 266px;
  }

  .prop-head {
    display: grid;
    grid-template-columns: 101px 1fr;
    height: 24px;
    line-height: 23px;
    text-align: center;
    background: #ebebeb;
    border-bottom: 1px solid #ccc;
  }

  .prop-head span {
    border-right: 1px solid #ccc;
  }

  .prop-cat {
    display: flex;
    align-items: center;
    gap: 6px;
    height: 25px;
    padding-left: 9px;
    background: #ebebeb;
    border-bottom: 1px solid #fff;
  }

  .prop-cat.line:last-child {
    height: 24px;
    border-bottom: 0;
  }

  .prop-cat .right {
    margin-right: 3px;
    border-top-color: transparent;
  }

  .prop-row {
    display: grid;
    grid-template-columns: 86px 164px;
    align-items: center;
    height: 25px;
    padding-left: 15px;
    white-space: nowrap;
  }

  .prop-row .blue {
    color: #1a56f0;
  }

  .prop-row input {
    height: 21px;
    padding: 0 2px;
    border: 1px solid #d8d8d8;
  }

  .prop-row .dim {
    color: #888;
  }

  .prop-scroll {
    width: 4px;
    height: 349px;
    margin: 12px 0 0 4px;
    border-radius: 2px;
    background: #e8e8e8;
  }

  /* drawing area */
  .canvas {
    position: relative;
    flex: 1;
    min-width: 0;
    background: #000;
  }

  .plan {
    position: absolute;
    inset: 0;
    width: 100%;
    height: 100%;
  }

  .osd {
    font: bold 19px "Liberation Sans Narrow", "DejaVu Sans Mono", monospace;
  }

  .unit {
    font-size: 10px;
  }

  .dims {
    font-size: 18px;
    fill: #fff;
    text-anchor: middle;
  }

  /* dialog floating over the drawing */
  .dialog {
    position: absolute;
    left: 146px;
    top: 13px;
    width: 750px;
    padding: 0 11px 7px;
    border-radius: 8px;
    background: #fff;
  }

  .dialog-head {
    display: flex;
    align-items: center;
    gap: 12px;
    height: 29px;
    padding-top: 6px;
  }

  .dialog-head h2 {
    flex: 1;
    margin: 0;
    font-size: 14px;
    font-weight: normal;
    line-height: 20px;
  }

  .dialog-head .plain:last-child {
    margin-right: -1px;
  }

  .dialog-tabs {
    display: flex;
    align-items: flex-end;
    gap: 3px;
    height: 24px;
  }

  .dtab {
    height: 20px;
    margin-bottom: 1px;
    padding: 0 6px;
    border-radius: 2px 2px 0 0;
    background: #ddd;
    color: #555;
  }

  .dtab.on {
    position: relative;
    height: 25px;
    margin-bottom: -1px;
    border: 1px solid #c8c8cc;
    border-bottom: 0;
    background: #fff;
    color: #2c7fe0;
  }

  .dialog-frame {
    padding: 9px 1px 0 0;
    border: 1px solid #c4c7cc;
  }

  .box {
    border: 1px solid #ccc;
    border-radius: 3px;
  }

  .options {
    display: flex;
    gap: 8px;
    height: 23px;
    padding-left: 7px;
    align-items: flex-start;
  }

  .options label {
    display: flex;
    align-items: center;
    gap: 4px;
    height: 17px;
  }

  .strong {
    color: #000;
  }

  .options .off {
    color: #888;
  }

  .options input {
    width: 14px;
    height: 14px;
    accent-color: #2c7fe0;
  }

  .qty-area {
    display: flex;
  }

  .qty-clip {
    flex: 1;
    min-width: 0;
    overflow: hidden;
  }

  .qty {
    width: 739px;
    table-layout: fixed;
    border-collapse: separate;
    border-spacing: 0;
    line-height: 14px;
    color: #000;
  }

  .col-no {
    width: 7px;
  }

  .col-data {
    width: 61px;
  }

  .qty th,
  .qty td {
    padding: 0 3px;
    border: solid #000;
    border-width: 0 1px 1px 0;
    text-align: right;
    white-space: pre;
    font-weight: normal;
  }

  .qty th {
    padding: 0;
    text-align: center;
  }

  .qty .name {
    padding: 0;
    text-align: center;
  }

  .qty th.name {
    font-weight: bold;
  }

  .qty .band > * {
    border-top: 1px solid #000;
  }

  .qty td.no {
    padding: 0;
    border: 0;
    border-right: 1px solid #ddd;
    background: #f0f0f0;
    color: #555;
    text-align: left;
  }

  .qty .band .no {
    border-bottom: 1px solid #ccc;
  }

  .band {
    height: 19px;
  }

  .heads {
    height: 61px;
  }

  .qty tbody tr {
    height: 33px;
  }

  .qty tbody .tall {
    height: 47px;
  }

  .qty tbody .total {
    height: 19px;
    background: #e4e4e4;
  }

  .qty-scroll {
    width: 4px;
    height: 175px;
    margin: 82px 4px 0;
    border-radius: 2px;
    background: #e8e8e8;
  }

  .qty-hscroll {
    width: 244px;
    height: 4px;
    margin: 14px 0 4px 12px;
    border-radius: 2px;
    background: #e8e8e8;
  }

  .splitter {
    height: 5px;
    margin-bottom: 9px;
    background: #efefef;
  }

  .detail-title {
    height: 23px;
    line-height: 17px;
    color: #222;
  }

  .detail-area {
    display: flex;
    justify-content: space-between;
    height: 281px;
    overflow: hidden;
    border-top: 1px solid #bbb;
    border-bottom: 1px solid #aaa;
  }

  .detail {
    width: 264px;
    height: 294px;
    table-layout: fixed;
    border-collapse: separate;
    border-spacing: 0;
    border-right: 2px solid #808080;
    font-family: "Noto Sans", "Noto Sans CJK SC", sans-serif;
    line-height: 20px;
  }

  .detail th {
    width: 81px;
    height: 21px;
    padding: 0;
    background: #80baff;
    border: solid #6aa8f0;
    border-width: 0 1px 1px 0;
    color: #fff;
    font-weight: bold;
  }

  .detail th:first-child {
    width: 22px;
  }

  .detail th:last-child {
    width: auto;
  }

  .detail .corner {
    background: #f0f0f0;
    border-color: #ccc;
  }

  .detail td {
    height: 21px;
    padding: 0 3px;
    overflow: hidden;
    background: #d6eaff;
    border: solid #d0d0d0;
    border-width: 0 1px 1px 0;
    white-space: nowrap;
  }

  .detail td.place {
    padding: 0 0 0 4px;
    border-right: 0;
  }

  .detail-scroll {
    width: 4px;
    height: 14px;
    margin: 12px 4px 0;
    border-radius: 2px;
    background: #e4e4e4;
  }

  .dialog-foot {
    display: flex;
    gap: 6px;
    padding: 6px 4px 0 6px;
  }

  .dialog-foot button {
    width: 140px;
    height: 26px;
    border: 1px solid #ccc;
    border-radius: 3px;
    background: #fff;
  }

  .dialog-foot .primary {
    width: 80px;
    margin-left: auto;
    border-color: #2c7fe0;
    background: #2c7fe0;
    color: #fff;
  }

  .resize {
    position: absolute;
    right: 3px;
    bottom: 3px;
    width: 8px;
    height: 8px;
  }

  /* status bar */
  .status {
    display: flex;
    align-items: center;
    height: 31px;
    padding-left: 13px;
    background: #fcfcfc;
    white-space: nowrap;
  }

  .elev {
    width: 140px;
  }

  .picked {
    width: 110px;
  }

  .hidden-count {
    width: 110px;
  }

  .snap {
    display: flex;
    gap: 5px;
    margin-right: 16px;
  }

  .snap button {
    display: flex;
    align-items: center;
    justify-content: center;
    gap: 5px;
    width: 24px;
    height: 24px;
    border: 1px solid #aaa;
    border-radius: 3px;
  }

  .snap .wide {
    width: 35px;
  }

  .snap .on {
    background: #d6e6fb;
    border-color: #4a8fe8;
  }

  .status > .icon {
    margin-right: 4px;
  }

  .taskbar {
    display: flex;
    height: 18px;
    padding: 0 0 0 627px;
    overflow: hidden;
    border-top: 1px solid #a9b6bd;
    background: linear-gradient(90deg, #cde7f3, #d3e9f3 30%, #d8dde9 52%, #cfe9f5 72%, #d4e8f2);
  }

  .win {
    width: 22px;
    height: 22px;
    margin-top: 12px;
    flex: none;
  }

  .task-search {
    width: 214px;
    height: 36px;
    margin: 8px 15px 0 16px;
    padding: 7px 8px;
    border: 1px solid #c0ccd4;
    border-radius: 18px;
    background: #f1f5fa;
    flex: none;
  }

  .task-search svg {
    width: 14px;
    height: 14px;
  }

  .task {
    width: 24px;
    height: 24px;
    margin: 11px 20px 0 0;
    flex: none;
  }

  .task-active {
    width: 39px;
    height: 40px;
    margin: 4px 0 0 -7px;
    padding-left: 7px;
    border-radius: 4px;
    background: #edf2f8;
    flex: none;
  }

  .task-active .task {
    margin-top: 7px;
  }
</style>
